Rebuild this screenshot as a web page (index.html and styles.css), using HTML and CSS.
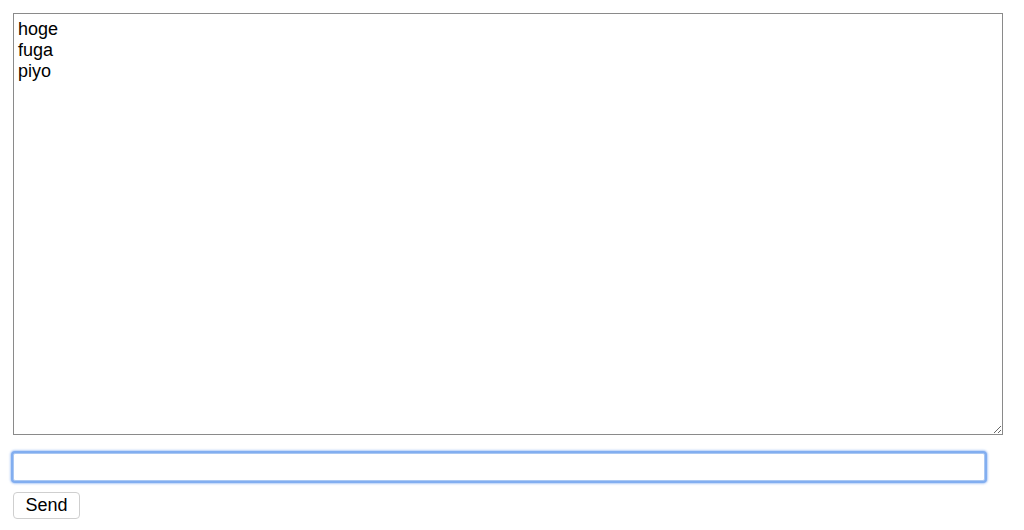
FILE: index.html
```html
<!DOCTYPE html>
<html lang="en">

<head>
    <meta charset="UTF-8" />
    <title>Chat</title>
    <link rel="stylesheet" href="styles.css">
</head>

<body>
    <div class="chat">
        <textarea class="log" readonly>hoge
fuga
piyo</textarea>
        <input type="text" class="message" />
        <button class="send">Send</button>
    </div>
</body>

</html>
```
FILE: styles.css
```css
* {
    box-sizing: border-box;
    margin: 0;
    padding: 0;
}

body {
    font-family: "Liberation Sans", Arial, sans-serif;
    background: #fff;
    color: #000;
}

.chat {
    display: flex;
    flex-direction: column;
    align-items: flex-start;
    padding: 13px;
}

.log {
    width: 990px;
    height: 422px;
    border: 1px solid #8a8a8a;
    padding: 5px 4px;
    font-family: "Liberation Sans", Arial, sans-serif;
    font-size: 18px;
    line-height: 21px;
    color: #000;
    resize: both;
    outline: none;
}

.message {
    width: 972px;
    height: 28px;
    margin-top: 18px;
    border: 1px solid #a9c7f2;
    border-radius: 2px;
    box-shadow: 0 0 0 2px #82aef0, 0 0 2px 3px rgba(130, 174, 240, 0.6);
    font-family: "Liberation Sans", Arial, sans-serif;
    font-size: 16px;
    padding: 0 4px;
    outline: none;
}

.send {
    margin-top: 11px;
    width: 67px;
    height: 27px;
    background: #fff;
    border: 1px solid #cfcfcf;
    border-radius: 4px;
    font-family: "Liberation Sans", Arial, sans-serif;
    font-size: 18px;
    color: #000;
    cursor: pointer;
}
```
